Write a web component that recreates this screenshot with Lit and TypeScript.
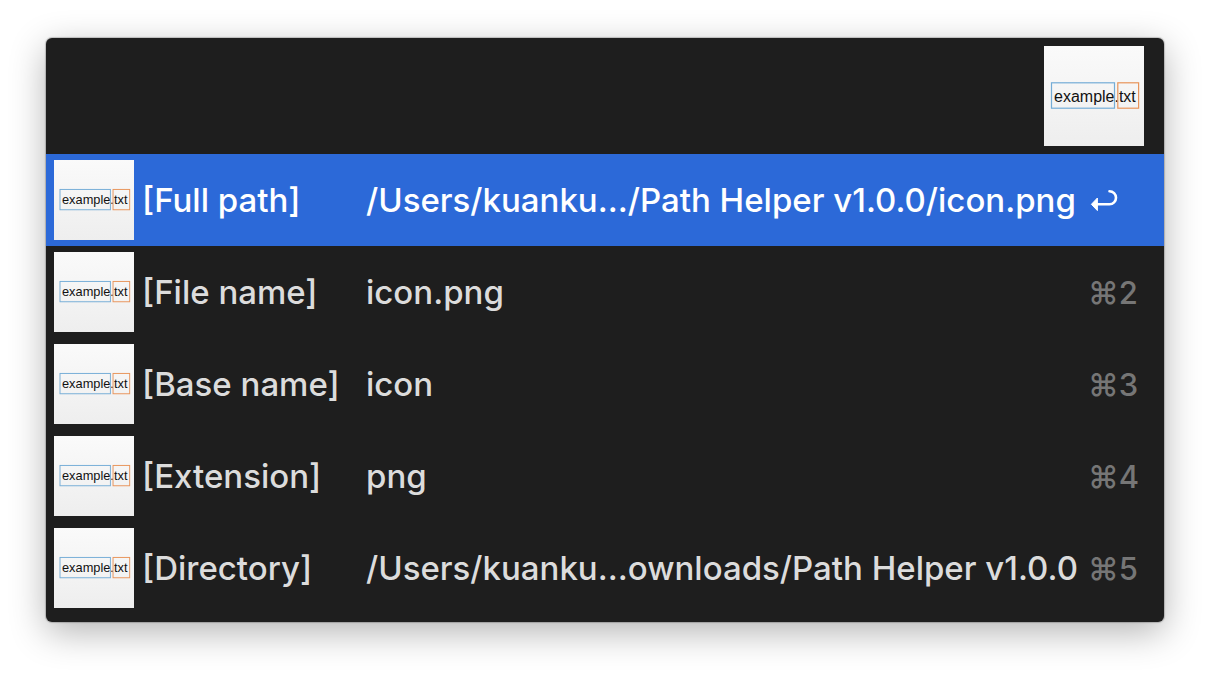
import { LitElement, html, css, svg } from "lit";
import { customElement, property, state } from "lit/decorators.js";

interface PathResult {
  label: string;
  value: string;
}

const RESULTS: PathResult[] = [
  { label: "[Full path]", value: "/Users/kuanku…/Path Helper v1.0.0/icon.png" },
  { label: "[File name]", value: "icon.png" },
  { label: "[Base name]", value: "icon" },
  { label: "[Extension]", value: "png" },
  { label: "[Directory]", value: "/Users/kuanku…ownloads/Path Helper v1.0.0" },
];

/** Workflow artwork: a file name with its base and extension outlined. */
@customElement("workflow-icon")
export class WorkflowIcon extends LitElement {
  static styles = css`
    :host {
      display: block;
      aspect-ratio: 1;
      background: linear-gradient(#fafafa, #eeeeee);
    }
    .art {
      display: block;
      width: 100%;
      height: 100%;
    }
    .name {
      font: 16px "Liberation Sans", Arial, sans-serif;
      fill: #111;
    }
    .box {
      fill: none;
      stroke-width: 1.2;
    }
    .base {
      stroke: #74acd6;
    }
    .ext {
      stroke: #e8945a;
    }
  `;

  render() {
    return html`<svg class="art" viewBox="0 0 100 100" aria-hidden="true">
      ${svg`
        <text class="name" x="10" y="55.5">example.txt</text>
        <rect class="box base" x="7.5" y="36.8" width="63" height="25.4" />
        <rect class="box ext" x="73.8" y="36.8" width="20.8" height="25.4" />
      `}
    </svg>`;
  }
}

@customElement("result-row")
export class ResultRow extends LitElement {
  @property({ attribute: false }) result!: PathResult;
  @property({ type: Number }) index = 0;
  @property({ type: Boolean }) selected = false;

  static styles = css`
    :host {
      display: block;
    }
    .row {
      display: grid;
      grid-template-columns: 80px 216px minmax(0, 1fr) 48px;
      align-items: center;
      column-gap: 8px;
      width: 100%;
      padding: 6px 28px 6px 8px;
      border: 0;
      background: transparent;
      color: #dcdcdc;
      font: 450 33px/44px Inter, "Liberation Sans", sans-serif;
      text-align: left;
      white-space: nowrap;
    }
    .row.selected {
      background: #2c69d8;
      color: #fff;
    }
    .shortcut {
      padding-top: 2px;
      font-size: 31px;
      color: #767676;
    }
    .return {
      display: block;
      width: 32px;
      height: 24px;
    }
  `;

  render() {
    return html`<button class="row ${this.selected ? "selected" : ""}">
      <workflow-icon></workflow-icon>
      <span>${this.result.label}</span>
      <span>${this.result.value}</span>
      ${this.selected
        ? html`<svg class="return" viewBox="0 0 32 24" role="img" aria-label="Return">
            <path d="M21.5 3.3a6.5 6.5 0 0 1 0 13H9" fill="none" stroke="#fff" stroke-width="2.6" stroke-linecap="round" />
            <path d="M3.4 16.3 9.4 10v12.6z" fill="#fff" stroke="#fff" stroke-linejoin="round" />
          </svg>`
        : html`<span class="shortcut">⌘${this.index}</span>`}
    </button>`;
  }
}

@customElement("app-root")
export class AppRoot extends LitElement {
  @state() private active = 0;

  static styles = css`
    :host {
      display: block;
      box-sizing: border-box;
      min-height: 100vh;
      padding: 38px 46px;
      background: #fff;
    }
    .panel {
      overflow: hidden;
      padding-bottom: 8px;
      border-radius: 6px;
      background: #1e1e1e;
      box-shadow: 0 0 1px 1px rgba(0, 0, 0, 0.2), 0 10px 36px rgba(0, 0, 0, 0.3);
    }
    .search {
      display: flex;
      align-items: center;
      gap: 16px;
      padding: 8px 20px 8px 8px;
    }
    .query {
      flex: 1;
      min-width: 0;
      height: 80px;
      padding: 0 12px;
      border: 0;
      outline: 0;
      background: transparent;
      color: #dcdcdc;
      font: 48px Inter, "Liberation Sans", sans-serif;
    }
    .preview {
      width: 100px;
    }
    .results {
      margin: 0;
      padding: 0;
      list-style: none;
    }
  `;

  render() {
    return html`<main class="panel">
      <div class="search">
        <input class="query" type="text" aria-label="Search" />
        <workflow-icon class="preview"></workflow-icon>
      </div>
      <ul class="results">
        ${RESULTS.map(
          (result, i) => html`<li>
            <result-row
              .result=${result}
              .index=${i + 1}
              .selected=${i === this.active}
              @click=${() => (this.active = i)}
            ></result-row>
          </li>`
        )}
      </ul>
    </main>`;
  }
}
